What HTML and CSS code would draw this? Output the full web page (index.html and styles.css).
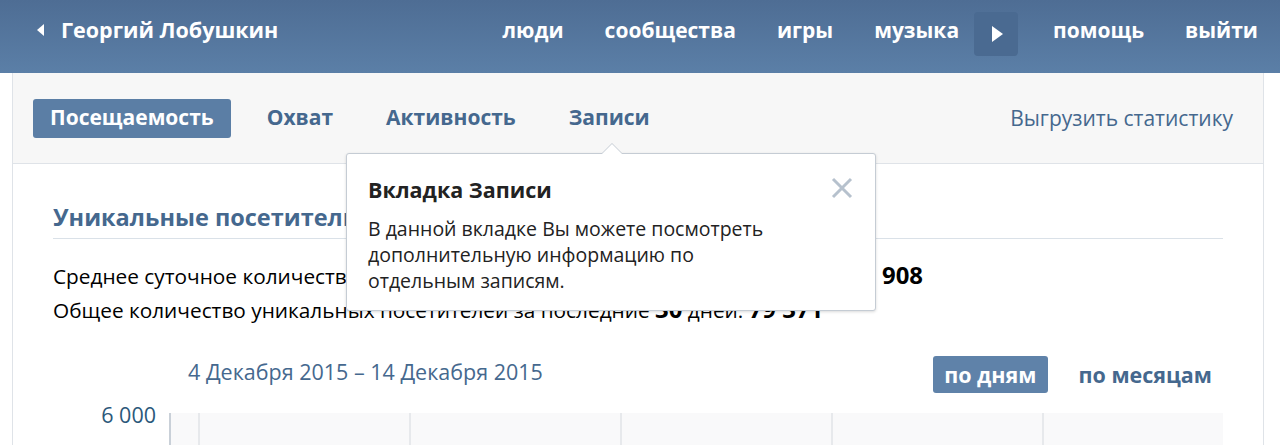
FILE: index.html
```html
<!DOCTYPE html>
<html lang="ru">
<head>
    <meta charset="UTF-8">
    <title>Статистика</title>
    <link rel="stylesheet" href="styles.css">
</head>
<body>
    <header class="topbar">
        <a class="back" href="#"><span class="back-arrow"></span>Георгий Лобушкин</a>
        <nav class="menu">
            <a href="#">люди</a>
            <a href="#">сообщества</a>
            <a href="#">игры</a>
            <a href="#">музыка</a>
            <span class="play"><span class="play-icon"></span></span>
            <a href="#">помощь</a>
            <a href="#">выйти</a>
        </nav>
    </header>

    <main class="panel">
        <div class="tabs">
            <a class="tab active" href="#">Посещаемость</a>
            <a class="tab" href="#">Охват</a>
            <a class="tab" href="#">Активность</a>
            <a class="tab" href="#">Записи</a>
            <a class="export" href="#">Выгрузить статистику</a>
        </div>

        <div class="content">
            <h2 class="section-title">Уникальные посетители</h2>
            <p class="stat">Среднее суточное количество уникальных посетителей за последние <b>30</b> дней: <b>2 908</b></p>
            <p class="stat">Общее количество уникальных посетителей за последние <b>30</b> дней: <b>79 371</b></p>

            <div class="chart-head">
                <span class="range">4 Декабря 2015 – 14 Декабря 2015</span>
                <div class="period">
                    <a class="period-btn active" href="#">по дням</a>
                    <a class="period-btn" href="#">по месяцам</a>
                </div>
            </div>

            <div class="chart">
                <div class="y-label">6 000</div>
                <div class="plot">
                    <div class="col"></div>
                    <div class="col"></div>
                    <div class="col"></div>
                    <div class="col"></div>
                    <div class="col"></div>
                    <div class="col"></div>
                </div>
            </div>
        </div>

        <div class="hint">
            <svg class="hint-close" width="22" height="22" viewBox="0 0 22 22">
                <path d="M2 2 L20 20 M20 2 L2 20" stroke="#b6c1cd" stroke-width="3" fill="none"/>
            </svg>
            <div class="hint-title">Вкладка Записи</div>
            <div class="hint-text">В данной вкладке Вы можете посмотреть дополнительную информацию по отдельным записям.</div>
        </div>
    </main>
</body>
</html>
```

FILE: styles.css
```css
body {
    margin: 0;
    font-family: 'Open Sans', sans-serif;
    background: #fff;
    color: #000;
    overflow: hidden;
}

a {
    text-decoration: none;
}

.topbar {
    height: 73px;
    display: flex;
    align-items: center;
    padding: 0 22px 14px 37px;
    background: linear-gradient(#4e6d94, #5b7fa7);
    box-sizing: border-box;
}

.back {
    display: flex;
    align-items: center;
    color: #fff;
    font-weight: 700;
    font-size: 21.5px;
}

.back-arrow {
    width: 0;
    height: 0;
    border-top: 6px solid transparent;
    border-bottom: 6px solid transparent;
    border-right: 7px solid #fff;
    margin-right: 17px;
}

.menu {
    margin-left: auto;
    display: flex;
    align-items: center;
    gap: 41px;
}

.menu a {
    color: #fff;
    font-weight: 700;
    font-size: 21px;
}

.play {
    width: 44px;
    height: 44px;
    border-radius: 4px;
    background: #4a6a91;
    display: flex;
    align-items: center;
    justify-content: center;
    margin: 8px -6px 0 -26px;
}

.play-icon {
    width: 0;
    height: 0;
    border-top: 8px solid transparent;
    border-bottom: 8px solid transparent;
    border-left: 11px solid #fff;
    margin-left: 3px;
}

.panel {
    position: relative;
    margin: 0 16px 0 12px;
    border-left: 1px solid #dfe3e8;
    border-right: 1px solid #dfe3e8;
    height: 372px;
}

.tabs {
    height: 91px;
    background: #f7f7f7;
    border-bottom: 1px solid #dfe3e8;
    display: flex;
    align-items: center;
    padding: 0 30px 0 20px;
    box-sizing: border-box;
}

.tab {
    color: #45688e;
    font-weight: 700;
    font-size: 21px;
    padding: 6px 17px 8px;
    border-radius: 3px;
    margin-right: 19px;
    line-height: 25px;
}

.tab.active {
    background: #5b7ea5;
    color: #fff;
}

.export {
    margin-left: auto;
    color: #45688e;
    font-size: 21px;
}

.content {
    padding: 0 40px;
}

.section-title {
    margin: 39px 0 0;
    padding-bottom: 6px;
    color: #45688e;
    font-size: 23.5px;
    font-weight: 700;
    line-height: 29px;
    border-bottom: 1px solid #dae1e8;
}

.stat {
    margin: 0;
    font-size: 20.8px;
    line-height: 34px;
    white-space: nowrap;
}

.stat b {
    font-size: 1.15em;
    line-height: 1;
}

.stat:first-of-type {
    margin-top: 20px;
}

.chart-head {
    display: flex;
    align-items: center;
    justify-content: space-between;
    margin-top: 29px;
    padding-left: 135px;
}

.range {
    color: #45688e;
    font-size: 21.5px;
    margin-top: -6px;
}

.period {
    display: flex;
    gap: 20px;
}

.period-btn {
    color: #45688e;
    font-weight: 700;
    font-size: 21.5px;
    line-height: 27px;
    padding: 5px 11px;
    border-radius: 3px;
}

.period-btn.active {
    background: #5f82a9;
    color: #fff;
}

.chart {
    display: flex;
    margin-top: 20px;
}

.y-label {
    width: 103px;
    text-align: right;
    color: #2b587a;
    font-size: 21.5px;
    line-height: 20px;
    margin-top: -8px;
}

.plot {
    margin-left: 13px;
    flex: 1;
    height: 60px;
    background: #f9f9fa;
    border-left: 2px solid #c9d0d8;
    display: grid;
    grid-template-columns: 29px repeat(4, 211px) 1fr;
}

.col {
    border-right: 2px solid #e7e9ec;
}

.col:last-child {
    border-right: none;
}

.hint {
    position: absolute;
    left: 333px;
    top: 80px;
    width: 530px;
    height: 158px;
    box-sizing: border-box;
    padding: 22px 20px 0 21px;
    background: #fff;
    border: 1px solid #c5ccd4;
    border-radius: 3px;
    box-shadow: 0 1px 3px rgba(0, 0, 0, 0.15);
}

.hint::before,
.hint::after {
    content: '';
    position: absolute;
    left: 254px;
    border: 11px solid transparent;
    border-top: none;
}

.hint::before {
    top: -11px;
    border-bottom-color: #c5ccd4;
}

.hint::after {
    top: -10px;
    border-bottom-color: #fff;
}

.hint-close {
    position: absolute;
    right: 22px;
    top: 23px;
}

.hint-title {
    font-weight: 700;
    font-size: 21.5px;
    line-height: 28px;
    margin-bottom: 12px;
    color: #222;
}

.hint-text {
    font-size: 19.5px;
    line-height: 26px;
    width: 432px;
    color: #222;
}
```
